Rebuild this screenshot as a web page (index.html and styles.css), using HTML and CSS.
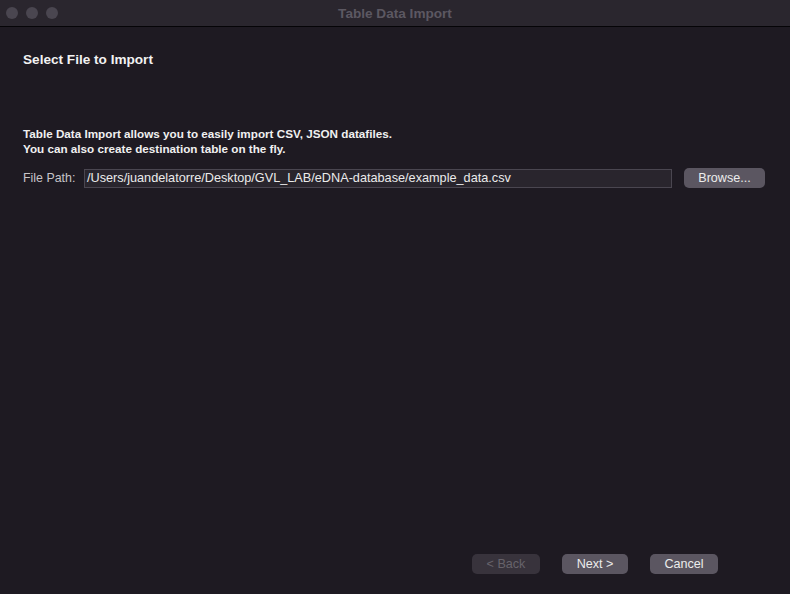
FILE: index.html
```html
<!DOCTYPE html>
<html>
<head>
<meta charset="utf-8">
<link rel="stylesheet" href="styles.css">
</head>
<body>
<div class="window">
  <div class="titlebar">
    <div class="lights">
      <span class="light"></span><span class="light"></span><span class="light"></span>
    </div>
    <div class="title">Table Data Import</div>
  </div>
  <div class="content">
    <h1 class="heading">Select File to Import</h1>
    <p class="desc">Table Data Import allows you to easily import CSV, JSON datafiles.<br>You can also create destination table on the fly.</p>
    <div class="filerow">
      <label class="label">File Path:</label>
      <div class="input">/Users/juandelatorre/Desktop/GVL_LAB/eDNA-database/example_data.csv</div>
      <button class="btn browse">Browse...</button>
    </div>
  </div>
  <div class="footer">
    <button class="btn nav disabled">&lt; Back</button>
    <button class="btn nav next">Next &gt;</button>
    <button class="btn nav">Cancel</button>
  </div>
</div>
</body>
</html>
```
FILE: styles.css
```css
html, body {
  margin: 0;
  padding: 0;
  width: 790px;
  height: 594px;
  overflow: hidden;
  background: #1e1a22;
  font-family: "Liberation Sans", Arial, sans-serif;
}
.window {
  width: 790px;
  height: 594px;
  display: flex;
  flex-direction: column;
  background: #1e1a22;
}
.titlebar {
  height: 26px;
  border-bottom: 1px solid #050407;
  background: #2a262e;
  position: relative;
  display: flex;
  align-items: center;
  justify-content: center;
}
.lights {
  position: absolute;
  left: 6px;
  top: 7px;
  display: flex;
  gap: 8px;
}
.light {
  width: 12px;
  height: 12px;
  border-radius: 50%;
  background: #4a4650;
}
.title {
  font-size: 13.6px;
  font-weight: bold;
  color: #5c5862;
}
.content {
  flex: 1;
  padding: 0 23px;
}
.heading {
  margin: 25px 0 0;
  font-size: 13.6px;
  font-weight: bold;
  color: #f2f2f2;
  line-height: 15px;
}
.desc {
  margin: 59px 0 0;
  font-size: 11.7px;
  font-weight: bold;
  color: #f0f0f0;
  line-height: 15px;
}
.filerow {
  margin-top: 12px;
  display: flex;
  align-items: center;
}
.label {
  font-size: 12.4px;
  color: #c6c4c8;
  width: 61px;
}
.input {
  width: 584px;
  height: 17px;
  line-height: 17px;
  border: 1px solid #4a4650;
  background: #29252d;
  color: #ebebeb;
  font-size: 12.7px;
  padding: 0 0 0 2px;
  box-sizing: content-box;
  white-space: nowrap;
  overflow: hidden;
}
.btn {
  font-family: "Liberation Sans", Arial, sans-serif;
  border: none;
  background: #5b5661;
  color: #ececec;
  font-size: 12.6px;
  border-radius: 5px;
  height: 20px;
  padding: 0;
}
.browse {
  margin-left: 12px;
  width: 81px;
}
.footer {
  height: 40px;
  display: flex;
  padding-left: 472px;
  gap: 22px;
  align-items: flex-start;
}
.nav {
  width: 68px;
}
.next {
  width: 66px;
}
.disabled {
  background: #38333c;
  color: #67636b;
}
```
